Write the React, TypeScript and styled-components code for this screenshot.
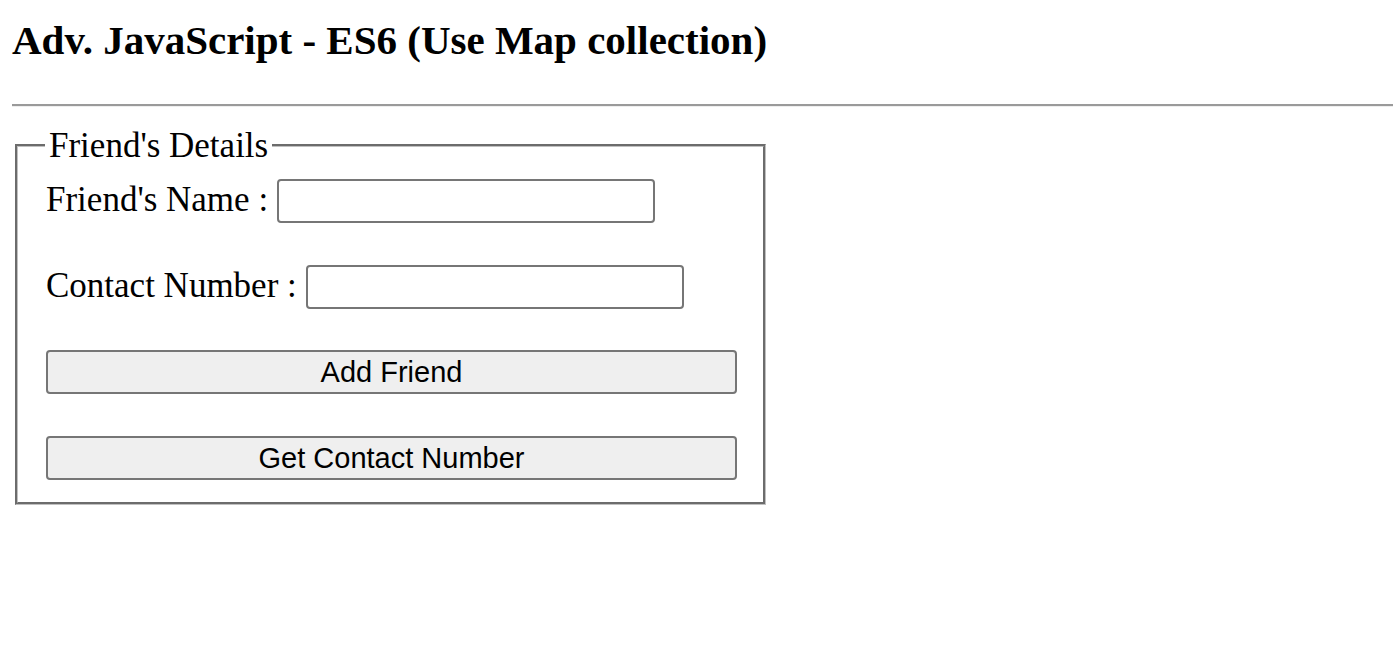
import React from "react";
import styled, { createGlobalStyle } from "styled-components";

const Global = createGlobalStyle`
  html, body { margin: 0; padding: 0; background: #ffffff; }
  body { font-family: "Liberation Serif", "Times New Roman", serif; color: #000000; }
`;

const Page = styled.div`
  padding: 0 3px 0 12px;
`;

const Title = styled.h1`
  margin: 17px 0 41px;
  font-size: 41px;
  line-height: 46px;
  font-weight: 700;
`;

const Rule = styled.hr`
  margin: 0 0 18px;
  height: 0;
  border: 0;
  border-top: 2px solid #9a9a9a;
  border-bottom: 1px solid #eeeeee;
`;

const Fieldset = styled.fieldset`
  box-sizing: border-box;
  width: 751px;
  margin: 0 3px;
  padding: 13px 26px 22px 28px;
  border: 3px groove rgb(192, 192, 192);
  min-width: 0;
`;

const Legend = styled.legend`
  padding: 0 4px;
  margin-left: -1px;
  font-size: 35px;
  line-height: 41px;
`;

const Form = styled.div`
  display: flex;
  flex-direction: column;
  gap: 41.5px;
`;

const Row = styled.div`
  display: flex;
  align-items: flex-start;
  gap: 9px;
  height: 44px;
`;

const Label = styled.label`
  font-size: 35px;
  line-height: 41px;
  margin-top: 0;
  white-space: nowrap;
`;

const Input = styled.input`
  box-sizing: border-box;
  width: 378px;
  height: 44px;
  margin: 0;
  border: 2px solid #767676;
  border-radius: 4px;
  background: #ffffff;
  font-family: "Liberation Sans", Arial, sans-serif;
  font-size: 20px;
  padding: 2px 4px;
  outline: none;
`;

const Button = styled.button`
  box-sizing: border-box;
  width: 100%;
  height: 44px;
  margin: 0;
  border: 2px solid #767676;
  border-radius: 4px;
  background: #efefef;
  color: #000000;
  font-family: "Liberation Sans", Arial, sans-serif;
  font-size: 29px;
  line-height: 32px;
  padding: 0;
  cursor: default;
`;

export default function App() {
  return (
    <Page>
      <Global />
      <Title>Adv. JavaScript - ES6 (Use Map collection)</Title>
      <Rule />
      <Fieldset>
        <Legend>Friend's Details</Legend>
        <Form>
          <Row>
            <Label htmlFor="fname">Friend's Name :</Label>
            <Input id="fname" type="text" />
          </Row>
          <Row>
            <Label htmlFor="fnum">Contact Number :</Label>
            <Input id="fnum" type="text" />
          </Row>
          <Button type="button">Add Friend</Button>
          <Button type="button">Get Contact Number</Button>
        </Form>
      </Fieldset>
    </Page>
  );
}
